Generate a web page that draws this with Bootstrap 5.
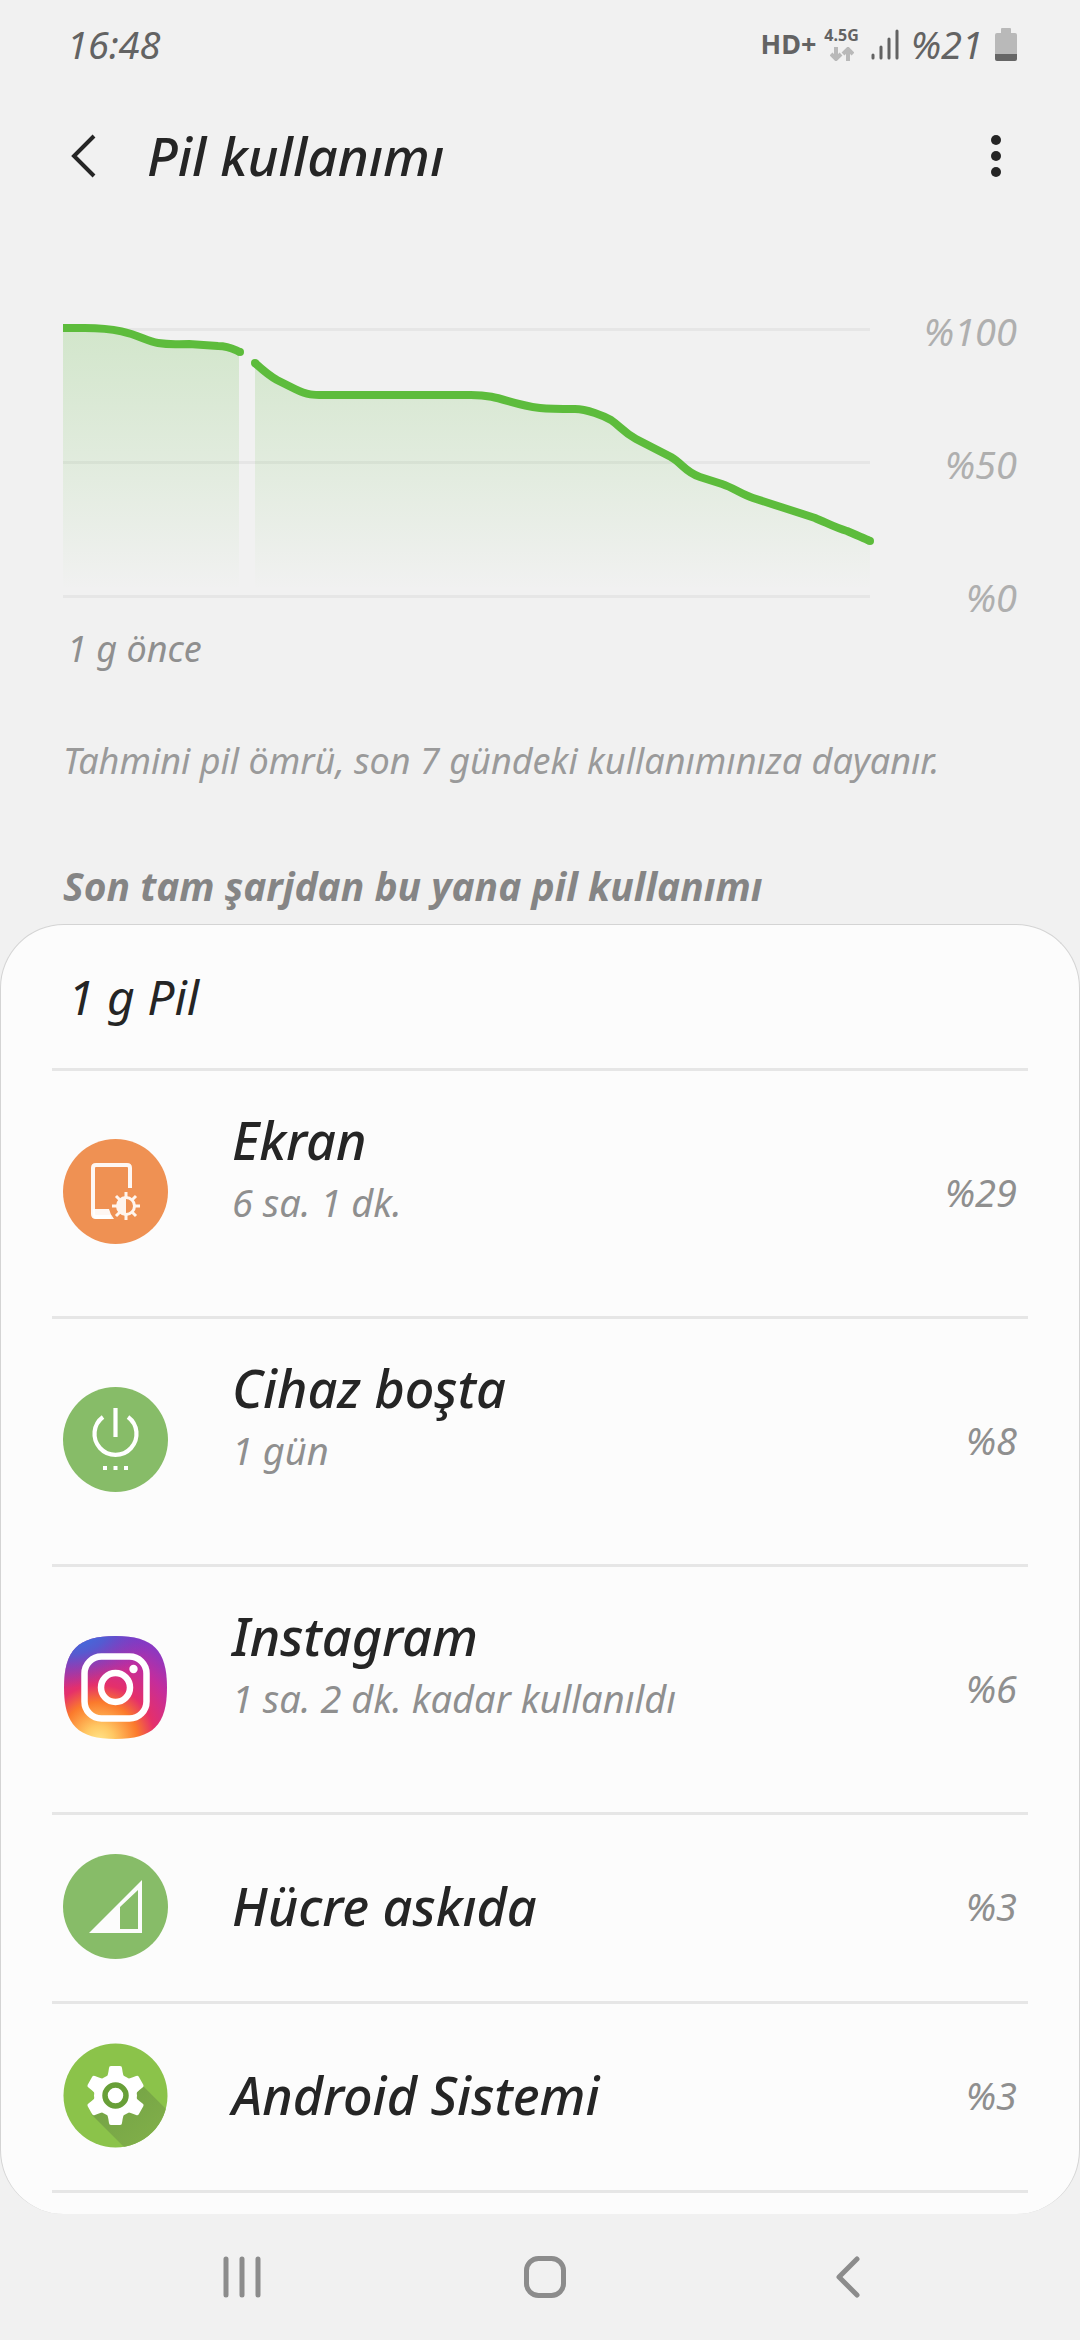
<!DOCTYPE html>
<html lang="tr">
<head>
<meta charset="utf-8">
<meta name="viewport" content="width=device-width, initial-scale=1">
<title>Pil kullanımı</title>
<link href="https://cdn.jsdelivr.net/npm/bootstrap@5.3.0/dist/css/bootstrap.min.css" rel="stylesheet">
<style>
  body { background: #f1f1f1; color: #252525; font-family: "Noto Sans", "Open Sans", sans-serif; font-style: italic; }
  svg { display: block; flex: none; }
  .gutter { padding-left: 63px; padding-right: 63px; }
  .status { height: 88px; color: #636363; font-size: 38px; line-height: 44px; }
  .upright { font-style: normal; font-weight: 700; }
  .hd { font-size: 27px; }
  .net { font-size: 16px; line-height: 16px; }
  .topbar { height: 136px; margin-bottom: 86px; }
  .icon-btn { border: 0; padding: 0; background: none; color: inherit; }
  .screen-title { font-size: 53px; line-height: 64px; font-weight: 500; margin-left: 51px; }
  .small-text { font-size: 36px; line-height: 42px; }
  .graph { height: 308px; }
  .graph svg { flex: 1 1 0; min-width: 0; height: 308px; }
  .scale { width: 142px; color: #afafaf; }
  .percent { font-size: 38px; line-height: 42px; }
  .soft { color: #8f8f8f; }
  .since { padding: 10px 4px 0; }
  .note { color: #9a9a9a; margin-top: 70px; }
  .section-title { font-size: 39px; line-height: 44px; font-weight: 700; color: #858585; margin: 82px 0 16px; }
  .sheet { background: #fcfcfc; border: 1px solid #d4d4d4; border-bottom: 0; border-radius: 64px; padding: 0 51px 21px; }
  .sheet-head { height: 143px; padding: 0 16px; font-size: 48px; line-height: 64px; }
  .usage { border-bottom: 3px solid #e6e6e6; border-radius: 0; }
  .usage .list-group-item { display: flex; align-items: center; background: none; color: #252525; border: 0; border-top: 3px solid #e6e6e6; height: 189px; padding: 0 11px 4px; }
  .usage .list-group-item.tall { height: 248px; }
  .app-text { margin-left: 64px; }
  .tall .app-text { padding-bottom: 44px; }
  .app-name { font-size: 52px; line-height: 64px; font-weight: 500; }
  .app-time { font-size: 38px; line-height: 60px; }
  .softkeys { height: 126px; padding: 0 81px 0 91px; color: #8c8c8c; }
</style>
</head>
<body class="d-flex flex-column min-vh-100">

<div class="status gutter d-flex align-items-center">
  <time class="ps-1">16:48</time>
  <div class="ms-auto d-flex align-items-center gap-2">
    <span class="upright hd">HD+</span>
    <div class="d-flex flex-column align-items-center gap-1">
      <span class="upright net">4.5G</span>
      <svg width="24" height="14" viewBox="0 0 24 14" fill="none" stroke="#b9b9b9" stroke-width="4" aria-hidden="true"><path d="M6 0v12M1 7l5 5 5-5M18 14V2M13 7l5-5 5 5"/></svg>
    </div>
    <svg class="ms-1" width="28" height="31" viewBox="0 0 28 31" stroke="currentColor" stroke-width="3" stroke-linecap="round" aria-hidden="true"><path d="M2 26v3M10 18v11M18 10v19M26 2v27"/></svg>
    <span class="ms-1">%21</span>
    <svg class="ms-1" width="22" height="33" viewBox="0 0 22 33" aria-hidden="true"><path d="M7 0h8q1 0 1 1v4h4q2 0 2 2v20H0V7q0-2 2-2h4V1q0-1 1-1z" fill="#b9b9b9"/><path d="M0 26h22v5q0 2-2 2H2q-2 0-2-2z" fill="#666"/></svg>
  </div>
</div>

<header class="topbar gutter d-flex align-items-center">
  <button class="icon-btn ps-2" type="button" aria-label="Geri"><svg width="25" height="44" viewBox="0 0 25 44" fill="none" stroke="currentColor" stroke-width="4"><path d="M23 2L3 22l20 20"/></svg></button>
  <h1 class="screen-title mb-0">Pil kullanımı</h1>
  <button class="icon-btn ms-auto me-3" type="button" aria-label="Diğer seçenekler"><svg width="10" height="44" viewBox="0 0 10 44" fill="currentColor"><circle cx="5" cy="6" r="5"/><circle cx="5" cy="22" r="5"/><circle cx="5" cy="38" r="5"/></svg></button>
</header>

<main class="flex-grow-1">
  <section class="gutter">
    <div class="graph d-flex">
      <svg viewBox="0 0 812 308" preserveAspectRatio="none" role="img" aria-label="Pil seviyesi grafiği">
        <defs>
          <linearGradient id="level" gradientUnits="userSpaceOnUse" x1="0" y1="18" x2="0" y2="280">
            <stop offset="0" stop-color="#5dbc3c" stop-opacity=".21"/>
            <stop offset=".55" stop-color="#5dbc3c" stop-opacity=".1"/>
            <stop offset="1" stop-color="#5dbc3c" stop-opacity="0"/>
          </linearGradient>
        </defs>
        <path d="M0 19.500H807M0 152.500H807M0 286.500H807" stroke="#e6e6e6" stroke-width="3"/>
        <path fill="url(#level)" d="M0 18H22C66 18 75 30 100 34C125 33 160 36 176 42V280H0z"/>
        <path fill="url(#level)" d="M192 53C212 72 222 74 232 78C244 85 252 85 264 85H408C440 85 445 95 478 98C493 99 503 99 513 99C530 101 542 106 550 111C560 118 568 124 573 127L611 147C625 157 627 163 645 167C680 177 675 180 690 184L742 203C765 211 775 217 790 221C801 226 804 226 807 231V280H192z"/>
        <g fill="none" stroke="#5dbc3c" stroke-width="8">
          <path d="M0 18H22C68 18 78 30 95 33C108 35 112 34 126 34L155 36C166 36 170 39 177 42"/>
          <path d="M192 53Q205 65 214 70L232 79C246 86 252 85 268 85H408C438 85 444 94 477 98C487 99 505 99 512 99C524 99 541 106 548 110C557 116 560 122 573 129L608 147C620 154 622 162 637 167L659 174C671 178 678 184 690 188L718 197L752 208C764 213 773 218 784 221C798 227 805 230 807 231"/>
        </g>
        <g fill="#5dbc3c"><circle cx="177" cy="42" r="4"/><circle cx="192" cy="53" r="4"/><circle cx="807" cy="231" r="4"/></g>
      </svg>
      <div class="scale percent d-flex flex-column justify-content-between text-end">
        <span>%100</span><span>%50</span><span>%0</span>
      </div>
    </div>
    <div class="small-text soft since">1 g önce</div>
    <p class="small-text note mb-0">Tahmini pil ömrü, son 7 gündeki kullanımınıza dayanır.</p>
    <h2 class="section-title">Son tam şarjdan bu yana pil kullanımı</h2>
  </section>

  <section class="sheet">
    <div class="sheet-head d-flex align-items-center">1 g Pil</div>
    <div class="usage list-group list-group-flush">
      <a href="#ekran" class="list-group-item tall">
        <svg width="105" height="105" viewBox="0 0 105 105" aria-hidden="true">
          <circle cx="52.500" cy="52.500" r="52.500" fill="#ef9153"/>
          <path d="M67 49V29q0-3-3-3H33q-3 0-3 3v46q0 3 3 3h15" fill="none" stroke="#fff" stroke-opacity=".93" stroke-width="4"/>
          <path d="M30 70h16q1 5 5 10H34q-4 0-4-4z" fill="#fff" fill-opacity=".93"/>
          <g fill="none" stroke="#fff5ee" stroke-width="3"><circle cx="63" cy="67" r="8.500"/><path d="M63 53v5M63 76v5M49 67h5M72 67h5M53 57l4 4M69 73l4 4M73 57l-4 4M57 73l-4 4"/></g>
          <path d="M63 58a9 9 0 000 18z" fill="#fff5ee"/>
        </svg>
        <div class="app-text"><div class="app-name">Ekran</div><div class="app-time soft">6 sa. 1 dk.</div></div>
        <span class="percent soft ms-auto">%29</span>
      </a>
      <a href="#cihaz" class="list-group-item tall">
        <svg width="105" height="105" viewBox="0 0 105 105" aria-hidden="true">
          <circle cx="52.500" cy="52.500" r="52.500" fill="#87bc68"/>
          <path d="M40 30a21 21 0 1025 0M52.500 21v29" fill="none" stroke="#fff" stroke-width="4.200"/>
          <path d="M40 79h4v4h-4zM50.500 79h4v4h-4zM61 79h4v4h-4z" fill="#fff"/>
        </svg>
        <div class="app-text"><div class="app-name">Cihaz boşta</div><div class="app-time soft">1 gün</div></div>
        <span class="percent soft ms-auto">%8</span>
      </a>
      <a href="#instagram" class="list-group-item tall">
        <svg width="105" height="105" viewBox="0 0 105 105" aria-hidden="true">
          <defs>
            <radialGradient id="warm" gradientUnits="userSpaceOnUse" cx="36" cy="106" r="108">
              <stop offset="0" stop-color="#ffe58a"/><stop offset=".14" stop-color="#ffc863"/><stop offset=".36" stop-color="#fb7a2c"/><stop offset=".52" stop-color="#e5306a"/><stop offset=".76" stop-color="#c42d9c"/><stop offset="1" stop-color="#8a38c2"/>
            </radialGradient>
            <radialGradient id="cool" gradientUnits="userSpaceOnUse" cx="0" cy="0" r="1" gradientTransform="translate(14 -4) rotate(-12) scale(82 56)">
              <stop offset="0" stop-color="#3478e4"/><stop offset=".4" stop-color="#4c5fd4" stop-opacity=".9"/><stop offset="1" stop-color="#7038c8" stop-opacity="0"/>
            </radialGradient>
            <path id="squircle" d="M52.500 1C90 1 104 15 104 52.500S90 104 52.500 104 1 90 1 52.500 15 1 52.500 1z"/>
          </defs>
          <use href="#squircle" fill="url(#warm)"/><use href="#squircle" fill="url(#cool)"/>
          <rect x="21.500" y="21.500" width="62" height="62" rx="17" fill="none" stroke="#fff" stroke-width="6.500"/>
          <circle cx="52.500" cy="52.500" r="14.500" fill="none" stroke="#fff" stroke-width="6.500"/>
          <circle cx="70.500" cy="34" r="4.200" fill="#fff"/>
        </svg>
        <div class="app-text"><div class="app-name">Instagram</div><div class="app-time soft">1 sa. 2 dk. kadar kullanıldı</div></div>
        <span class="percent soft ms-auto">%6</span>
      </a>
      <a href="#hucre" class="list-group-item">
        <svg width="105" height="105" viewBox="0 0 105 105" aria-hidden="true">
          <circle cx="52.500" cy="52.500" r="52.500" fill="#87bc68"/>
          <path fill="#fcfcfc" fill-rule="evenodd" d="M26 79L79 26v53zM57 53v22h18V36z"/>
        </svg>
        <div class="app-text"><div class="app-name">Hücre askıda</div></div>
        <span class="percent soft ms-auto">%3</span>
      </a>
      <a href="#android" class="list-group-item">
        <svg width="105" height="105" viewBox="0 0 105 105" aria-hidden="true">
          <defs>
            <clipPath id="disc"><circle cx="52.500" cy="52.500" r="52"/></clipPath>
            <path id="tooth" d="M43 36q2-3 3-11 0-2 2-2h9q2 0 2 2 1 8 3 11z"/>
            <linearGradient id="cast" x1="0" y1="0" x2="1" y2="1"><stop offset="0" stop-color="#71a045"/><stop offset="1" stop-color="#84b24a"/></linearGradient>
          </defs>
          <circle cx="52.500" cy="52.500" r="52" fill="#8bc34a"/>
          <path clip-path="url(#disc)" d="M28 71L66 109H109V72L79 42z" fill="url(#cast)"/>
          <g fill="#fff">
            <circle cx="52.500" cy="52.500" r="21.500"/>
            <use href="#tooth"/><use href="#tooth" transform="rotate(60 52.500 52.500)"/><use href="#tooth" transform="rotate(120 52.500 52.500)"/><use href="#tooth" transform="rotate(180 52.500 52.500)"/><use href="#tooth" transform="rotate(240 52.500 52.500)"/><use href="#tooth" transform="rotate(300 52.500 52.500)"/>
          </g>
          <circle cx="52.500" cy="52.500" r="10.500" fill="#fff" stroke="#689f38" stroke-width="5.500"/>
        </svg>
        <div class="app-text"><div class="app-name">Android Sistemi</div></div>
        <span class="percent soft ms-auto">%3</span>
      </a>
    </div>
  </section>
</main>

<nav class="softkeys d-flex align-items-center" aria-label="Sistem gezintisi">
  <button class="icon-btn flex-fill d-flex justify-content-center" type="button" aria-label="Son uygulamalar"><svg width="42" height="42" viewBox="0 0 42 42" stroke="currentColor" stroke-width="5" stroke-linecap="round"><path d="M5 3v36M21 3v36M37 3v36"/></svg></button>
  <button class="icon-btn flex-fill d-flex justify-content-center" type="button" aria-label="Ana ekran"><svg width="42" height="42" viewBox="0 0 42 42" fill="none" stroke="currentColor" stroke-width="5"><rect x="2.500" y="2.500" width="37" height="37" rx="12"/></svg></button>
  <button class="icon-btn flex-fill d-flex justify-content-center" type="button" aria-label="Geri"><svg width="42" height="42" viewBox="0 0 42 42" fill="none" stroke="currentColor" stroke-width="5" stroke-linecap="round" stroke-linejoin="round"><path d="M30 3L12 21l18 18"/></svg></button>
</nav>

<script src="https://cdn.jsdelivr.net/npm/bootstrap@5.3.0/dist/js/bootstrap.bundle.min.js"></script>
</body>
</html>
